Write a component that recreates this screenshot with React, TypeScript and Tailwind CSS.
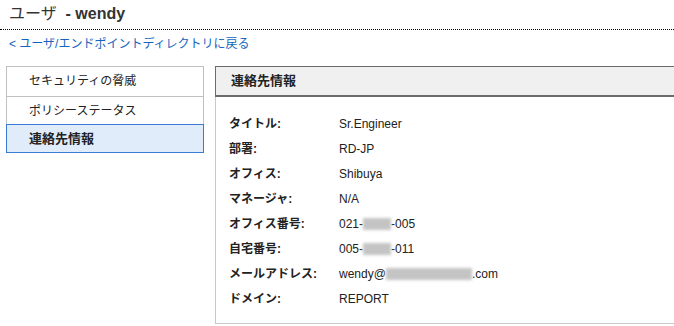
const navItems = [
  { label: "セキュリティの脅威", active: false },
  { label: "ポリシーステータス", active: false },
  { label: "連絡先情報", active: true },
];

function Blur({ w }: { w: number }) {
  return (
    <span
      className="inline-block h-[12px] bg-[#c4c4c4] blur-[1.5px] align-middle"
      style={{ width: w }}
    />
  );
}

const rows: { label: string; value: React.ReactNode }[] = [
  { label: "タイトル:", value: "Sr.Engineer" },
  { label: "部署:", value: "RD-JP" },
  { label: "オフィス:", value: "Shibuya" },
  { label: "マネージャ:", value: "N/A" },
  {
    label: "オフィス番号:",
    value: (
      <>
        021-<Blur w={28} />-005
      </>
    ),
  },
  {
    label: "自宅番号:",
    value: (
      <>
        005-<Blur w={28} />-011
      </>
    ),
  },
  {
    label: "メールアドレス:",
    value: (
      <>
        wendy@<Blur w={86} />.com
      </>
    ),
  },
  { label: "ドメイン:", value: "REPORT" },
];

export default function App() {
  return (
    <div
      className="w-[674px] h-[326px] overflow-hidden bg-white text-[12px] text-[#222]"
      style={{ fontFamily: '"Liberation Sans", "Noto Sans CJK JP", sans-serif' }}
    >
      <div className="h-[29px] pl-[9px] pt-[3px] text-[16px] leading-[22px] text-[#333]">
        ユーザ <span className="font-bold">&nbsp;- wendy</span>
      </div>
      <div className="border-t border-dotted border-black" />
      <div className="pl-[9px] pt-[6px] h-[36px] leading-[17px] text-[#1565c0]">
        &lt; ユーザ/エンドポイントディレクトリに戻る
      </div>
      <div className="flex items-start">
        <ul className="ml-[6px] w-[198px] border border-[#c0c0c0]">
          {navItems.map((item, i) => (
            <li
              key={item.label}
              className={
                item.active
                  ? "h-[29px] -m-px border border-[#3b7bd4] bg-[#e1ecfb] pl-[22px] leading-[27px] font-bold text-[13px]"
                  : `h-[29px] pl-[22px] leading-[28px] ${i > 0 ? "border-t border-[#c0c0c0]" : ""}`
              }
            >
              {item.label}
            </li>
          ))}
        </ul>
        <div className="ml-[11px] flex-1 mr-[-10px]">
          <div className="h-[31px] border border-b-2 border-[#6b6b6b] bg-[#f0f0f0] pl-[15px] leading-[28px] font-bold text-[13px]">
            連絡先情報
          </div>
          <div className="h-[227px] border-l border-b border-[#c8c8c8] pl-[13px] pt-[14px]">
            {rows.map((r) => (
              <div key={r.label} className="flex h-[25px] items-center">
                <div className="w-[110px] font-bold">{r.label}</div>
                <div className="flex items-center">{r.value}</div>
              </div>
            ))}
          </div>
        </div>
      </div>
    </div>
  );
}
